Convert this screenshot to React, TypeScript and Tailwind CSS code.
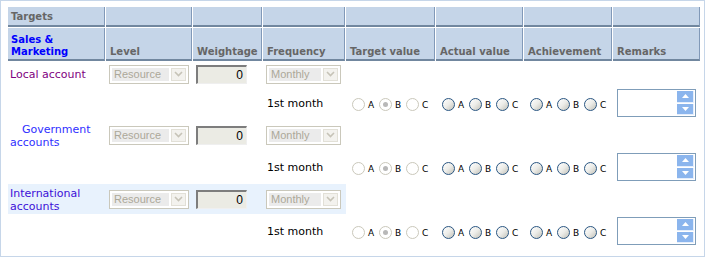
import React from 'react'

const HEAD = 'mr-px mb-px flex bg-[#c5d5e8] border-r border-r-[#8199b8] border-b-2 border-b-[#71879f]'

function Combo({ value, className }: { value: string; className: string }) {
    return (
        <div className={`flex h-[19px] items-stretch border border-[#cac8bb] bg-white p-[2px] ${className}`}>
            <div className="flex flex-1 items-center bg-[#ebebeb] pl-[2px] font-['Liberation_Sans',Arial,sans-serif] text-[11px] text-[#aca899]">
                {value}
            </div>
            <div className="ml-[2px] flex w-[15px] items-center justify-center border border-[#e2e0d7] bg-[#f3f2ee]">
                <svg width="9" height="6" viewBox="0 0 9 6">
                    <path d="M1 1 L4.5 4.5 L8 1" fill="none" stroke="#c6c3b7" strokeWidth="1.6" />
                </svg>
            </div>
        </div>
    )
}

function NumBox() {
    return (
        <div className="flex h-[19px] w-[51px] items-center justify-end border-t-2 border-l-2 border-r border-b border-t-[#7d7d7d] border-l-[#7d7d7d] border-r-[#efefef] border-b-[#efefef] bg-[#ebebe4] pr-[3px] font-['Liberation_Sans',Arial,sans-serif] text-[12px] text-black">
            0
        </div>
    )
}

function Radio({ disabled, checked }: { disabled?: boolean; checked?: boolean }) {
    if (disabled) {
        return (
            <span className="flex h-[13px] w-[13px] items-center justify-center rounded-full border border-[#cac8bb] bg-white">
                {checked && <span className="h-[5px] w-[5px] rounded-full bg-[#b8b8b8]" />}
            </span>
        )
    }
    return (
        <span className="h-[13px] w-[13px] rounded-full border-[1.5px] border-[#2a5682] bg-linear-to-br from-white via-[#ecece8] to-[#c2c1b8]" />
    )
}

function RadioGroup({ disabled }: { disabled?: boolean }) {
    return (
        <div className="flex items-center pl-[6px] pt-[2px]">
            {['A', 'B', 'C'].map((l) => (
                <div key={l} className="flex items-center">
                    <Radio disabled={disabled} checked={disabled && l === 'B'} />
                    <span className="ml-[3px] mr-[4px] w-[7px] pt-[2px] text-[9px] leading-none text-black">{l}</span>
                </div>
            ))}
        </div>
    )
}

function SpinBox() {
    return (
        <div className="flex h-[28px] w-[79px] justify-end border border-[#7f9db9] bg-white p-px">
            <div className="flex w-[17px] flex-col gap-px">
                <div className="flex flex-1 items-center justify-center border-r border-b border-[#e4eefc] bg-[#8bb5ed]">
                    <svg width="7" height="4" viewBox="0 0 7 4"><path d="M0 4 L3.5 0 L7 4 Z" fill="white" /></svg>
                </div>
                <div className="flex flex-1 items-center justify-center border-r border-b border-[#e4eefc] bg-[#8bb5ed]">
                    <svg width="7" height="4" viewBox="0 0 7 4"><path d="M0 0 L3.5 4 L7 0 Z" fill="white" /></svg>
                </div>
            </div>
        </div>
    )
}

function AccountRow({ name, color, indent, highlight }: { name: string; color: string; indent?: boolean; highlight?: boolean }) {
    const bg = highlight ? 'bg-[#e8f2fd]' : ''
    return (
        <>
            <div className={`flex items-center pl-[2px] pt-px text-[11px] leading-[13px] ${color} ${bg}`}>
                <span className={indent ? 'indent-[12px]' : ''}>{name}</span>
            </div>
            <div className={`flex items-center pl-[3px] ${bg}`}><Combo value="Resource" className="w-[80px]" /></div>
            <div className={`flex items-center pl-[3px] ${bg}`}><NumBox /></div>
            <div className={`flex items-center pl-[3px] ${bg}`}><Combo value="Monthly" className="w-[75px]" /></div>
            <div /><div /><div /><div />
        </>
    )
}

function MonthRow() {
    return (
        <>
            <div /><div /><div />
            <div className="flex items-center pl-[4px] pt-[3px] text-[11px] text-black">1st month</div>
            <div className="flex items-center"><RadioGroup disabled /></div>
            <div className="flex items-center"><RadioGroup /></div>
            <div className="flex items-center"><RadioGroup /></div>
            <div className="flex items-center pl-[4px]"><SpinBox /></div>
        </>
    )
}

export default function App() {
    const heads = ['Level', 'Weightage', 'Frequency', 'Target value', 'Actual value', 'Achievement', 'Remarks']

    return (
        <div className="h-[257px] w-[705px] border border-[#c6d6e9] bg-white pl-[7px] pt-[6px] font-['DejaVu_Sans',Verdana,sans-serif]">
            <div className="grid grid-cols-[98px_87px_70px_83px_90px_88px_89px_88px] grid-rows-[21px_34px_24px_34px_30px_34px_30px_34px]">
                {/* Header */}
                <div className={`${HEAD} items-center pl-[3px] pt-px text-[10px] font-bold text-[#666666]`}>Targets</div>
                {[1, 2, 3, 4, 5, 6, 7].map((i) => (
                    <div key={i} className={HEAD} />
                ))}
                <div className={`${HEAD} items-end pb-[1px] pl-[3px] text-[10px] font-bold leading-[12px] text-[#0000ff]`}>
                    Sales &amp; Marketing
                </div>
                {heads.map((h) => (
                    <div key={h} className={`${HEAD} items-end whitespace-nowrap pb-[1px] pl-[4px] text-[10px] font-bold leading-[12px] text-[#666666]`}>
                        {h}
                    </div>
                ))}

                {/* Accounts */}
                <AccountRow name="Local account" color="text-[#800080]" />
                <MonthRow />
                <AccountRow name="Government accounts" color="text-[#2f2fff]" indent />
                <MonthRow />
                <AccountRow name="International accounts" color="text-[#3c10d8]" highlight />
                <MonthRow />
            </div>
        </div>
    )
}
